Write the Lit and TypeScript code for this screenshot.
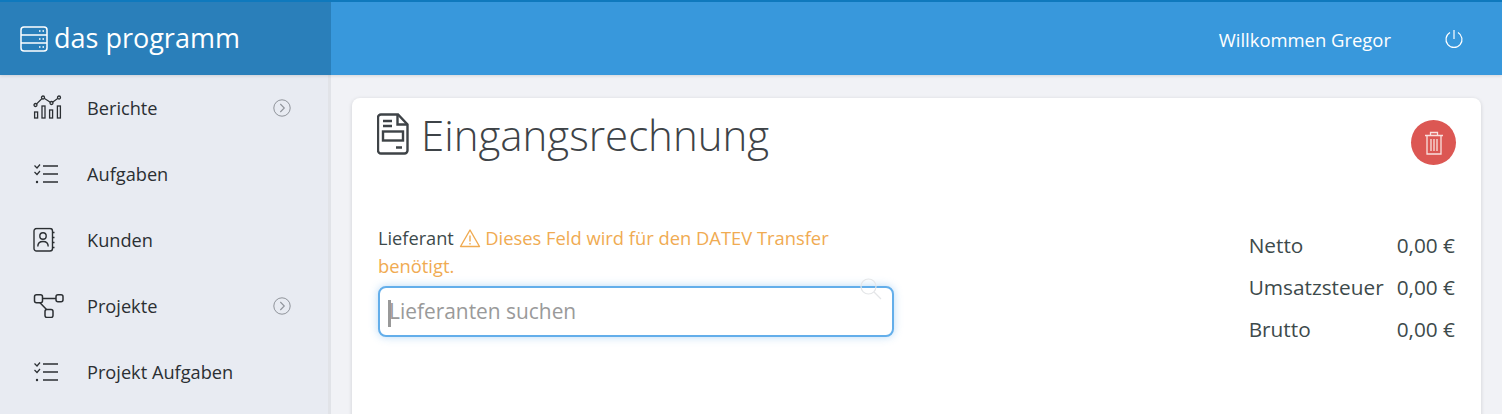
import { LitElement, html, css, svg } from "lit";
import { customElement } from "lit/decorators.js";

const chevron = html`<svg class="chev" viewBox="0 0 18 18" width="18" height="18" fill="none" stroke="#8f939a" stroke-width="1"><circle cx="9" cy="9" r="8.2"/><path d="M7.3 5l4 4-4 4" stroke-width="1.1"/></svg>`;

const chart = svg`<g fill="none" stroke="#2b2f33" stroke-width="1.3"><rect x="1.6" y="17" width="3" height="6"/><rect x="9" y="11" width="3" height="12"/><rect x="16.600" y="15" width="3" height="8"/><rect x="24.400" y="11" width="3" height="12"/><path d="M2.500 10L10 2.500l8.500 5.500 7.500-5.500" stroke-width="1.100"/><circle cx="2.500" cy="10" r="1.500" fill="#e8ebf2"/><circle cx="10" cy="2.500" r="1.500" fill="#e8ebf2"/><circle cx="18.500" cy="8" r="1.500" fill="#e8ebf2"/><circle cx="26" cy="2.500" r="1.500" fill="#e8ebf2"/></g>`;
const tasks = svg`<g fill="none" stroke="#2b2f33"><path d="M1.500 1.500L4 4l3-3.500M1.500 8L4 10.500l3-3.500" stroke-width="1.200"/><circle cx="4" cy="18" r="1.200" fill="#2b2f33" stroke="none"/><path d="M10 2h15M10 10h15M10 18h15" stroke-width="1.500"/></g>`;
const contact = svg`<g fill="none" stroke="#2b2f33" stroke-width="1.400"><rect x="1" y="1" width="18.500" height="22.500" rx="2.500"/><circle cx="10" cy="8.500" r="3.200"/><path d="M4.800 19c0-3.800 2-5 5.200-5s5.200 1.200 5.200 5"/><path d="M19.500 5h2M19.500 10h2M19.500 15h2M19.500 20h2" stroke-width="1.600"/></g>`;
const tree = svg`<g fill="none" stroke="#2b2f33" stroke-width="1.500"><rect x="1.500" y="0.800" width="8" height="8" rx="2"/><rect x="23" y="0.800" width="7" height="7" rx="2"/><rect x="12" y="15.500" width="8" height="8" rx="2"/><path d="M9.500 4.500H23M7 8.800l6.500 6.700"/></g>`;

const items = [
  { label: "Berichte", w: 30, h: 26, icon: chart, chev: true },
  { label: "Aufgaben", w: 26, h: 20, icon: tasks, chev: false },
  { label: "Kunden", w: 22, h: 25, icon: contact, chev: false },
  { label: "Projekte", w: 32, h: 24, icon: tree, chev: true },
  { label: "Projekt Aufgaben", w: 26, h: 20, icon: tasks, chev: false },
];

@customElement("app-root")
export class AppRoot extends LitElement {
  static styles = css`
    :host { display: block; width: 1502px; height: 414px; overflow: hidden; font-family: "Open Sans", sans-serif; background: #f1f2f6; }
    .top { display: flex; height: 75px; background: #3898dc; border-top: 2px solid #0f79bd; box-sizing: border-box; box-shadow: 0 1px 3px rgba(0,0,0,.12); position: relative; z-index: 2; }
    .brand { width: 331px; background: #2a7fba; display: flex; align-items: center; padding-left: 20px; gap: 5px; box-sizing: border-box; color: #fff; font-size: 27px; }
    .brand span { position: relative; top: -1px; }
    .user { margin-left: auto; display: flex; align-items: center; color: #fff; font-size: 18.450px; }
    .user span { position: relative; top: 1px; }
    .user svg { margin: 0 38px 0 53px; }
    .body { display: flex; height: 339px; }
    .side { width: 331px; flex: none; box-sizing: border-box; background: #e8ebf2; border-right: 3px solid #e1e3e8; }
    .row { height: 66px; display: flex; align-items: center; position: relative; font-size: 18.200px; color: #2b2f33; padding-left: 87px; }
    .ico { position: absolute; left: 33px; top: 50%; transform: translateY(-50%); display: block; }
    .chev { position: absolute; left: 273px; top: 24px; }
    .main { flex: 1; padding: 23px 21px 0 21px; }
    .card { position: relative; background: #fff; border-radius: 8px; height: 340px; box-shadow: 0 1px 4px rgba(0,0,0,.14); box-sizing: border-box; padding: 0 26px; color: #3d4a4b; }
    .title { display: flex; align-items: center; gap: 12px; height: 72px; margin-bottom: 2px; font-size: 42px; font-weight: 300; color: #3e4347; margin-left: -1px; }
    .del { position: absolute; right: 25px; top: 22px; width: 45px; height: 45px; border-radius: 50%; background: #dc5753; display: flex; align-items: center; justify-content: center; }
    .content { display: flex; justify-content: space-between; margin-top: 54px; }
    .field { width: 516px; }
    .label { font-size: 18.200px; line-height: 27px; color: #3d4a4b; white-space: nowrap; }
    .warn { color: #f0ab52; font-size: 18.350px; }
    .warnicon { vertical-align: -3px; }
    .inputwrap { position: relative; margin-top: 6px; }
    .input { height: 51px; box-sizing: border-box; border: 2px solid #63aeea; border-radius: 8px; box-shadow: 0 0 8px rgba(99,174,234,.45); display: flex; align-items: center; padding: 0 0 2px 8px; font-size: 20.900px; color: #9a9a9a; background: #fff; }
    .caret { width: 3px; height: 27px; background: #999; margin: 6px -2px 0 0; }
    .search { position: absolute; right: 12px; top: -8px; }
    .sums { display: grid; grid-template-columns: auto auto; column-gap: 13px; font-size: 20.800px; align-self: start; color: #3d4a4b; }
    .sums div { height: 42px; line-height: 42px; }
  `;

  render() {
    return html`
      <div class="top">
        <div class="brand">
          <svg width="29" height="26" viewBox="0 0 29 26" fill="none" stroke="#fff" stroke-width="1.500">
            <rect x="1" y="1" width="26" height="24" rx="3"/><path d="M1 9h26M1 17h26"/>
            <path d="M19 5h1.500M22.500 5H24M19 13h1.500M22.500 13H24M19 21h1.500M22.500 21H24"/>
          </svg>
          <span>das programm</span>
        </div>
        <div class="user">
          <span>Willkommen Gregor</span>
          <svg width="20" height="20" viewBox="0 0 20 20" fill="none" stroke="#fff" stroke-width="1.200"><path d="M6 3.500a8 8 0 1 0 8 0"/><path d="M10 1v9"/></svg>
        </div>
      </div>
      <div class="body">
        <div class="side">
          ${items.map(i => html`<div class="row">
            <svg class="ico" width=${i.w} height=${i.h} viewBox="0 0 ${i.w} ${i.h}">${i.icon}</svg>
            <span>${i.label}</span>${i.chev ? chevron : ""}
          </div>`)}
        </div>
        <div class="main">
          <div class="card">
            <div class="title">
              <svg width="32" height="43" viewBox="0 0 32 43" fill="none" stroke="#3e4347" stroke-width="2.400">
                <path d="M4 1.500h17l9.500 10v26a3 3 0 0 1-3 3H4a3 3 0 0 1-3-3v-33a3 3 0 0 1 3-3z"/>
                <path d="M20.500 1.500v10h10"/>
                <path d="M6 8h9M6 13h9M19 34.500h6"/>
                <rect x="6" y="18.500" width="20" height="9"/>
              </svg>
              Eingangsrechnung
            </div>
            <div class="del">
              <svg width="20" height="24" viewBox="0 0 20 24" fill="none" stroke="#f9e0de" stroke-width="1.300">
                <path d="M1 4.500h18M3 4.500V23h14V4.500M6.500 4.500V1.500h7v3M7 8v12M10 8v12M13 8v12"/>
              </svg>
            </div>
            <div class="content">
              <div class="field">
                <div class="label">Lieferant
                  <svg class="warnicon" width="22" height="20" viewBox="0 0 22 20" fill="none" stroke="#f0ab52" stroke-width="1.400"><path d="M11 2L1.500 18.500h19z" stroke-linejoin="round"/><path d="M11 7.500v6M11 15v1.500"/></svg>
                  <span class="warn">Dieses Feld wird für den DATEV Transfer</span><br><span class="warn">benötigt.</span>
                </div>
                <div class="inputwrap">
                  <div class="input"><span class="caret"></span>Lieferanten suchen</div>
                  <svg class="search" width="22" height="22" viewBox="0 0 22 22" fill="none" stroke="#e4e6e8" stroke-width="1.200"><circle cx="8.500" cy="8.500" r="7.500"/><path d="M14 14l7 7"/></svg>
                </div>
              </div>
              <div class="sums">
                <div>Netto</div><div>0,00 €</div>
                <div>Umsatzsteuer</div><div>0,00 €</div>
                <div>Brutto</div><div>0,00 €</div>
              </div>
            </div>
          </div>
        </div>
      </div>
    `;
  }
}
